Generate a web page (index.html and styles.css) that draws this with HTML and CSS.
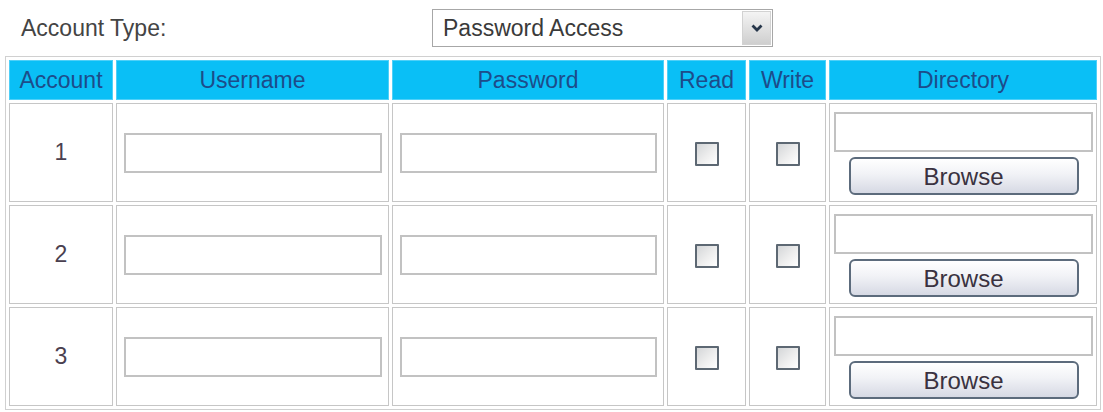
FILE: index.html
```html
<!DOCTYPE html>
<html lang="en">
<head>
    <meta charset="UTF-8">
    <title>FTP Accounts</title>
    <link rel="stylesheet" href="styles.css">
</head>
<body>
    <div class="type-row">
        <label class="type-label" for="accountType">Account Type:</label>
        <div class="select-box">
            <select id="accountType">
                <option>Password Access</option>
                <option>Anonymous</option>
            </select>
            <span class="select-arrow">
                <svg width="12" height="8" viewBox="0 0 12 8">
                    <path d="M1.5 1.5 L6 6 L10.5 1.5" fill="none" stroke="#26364a" stroke-width="2.8"/>
                </svg>
            </span>
        </div>
    </div>

    <table class="accounts">
        <colgroup>
            <col class="c-account">
            <col class="c-user">
            <col class="c-pass">
            <col class="c-read">
            <col class="c-write">
            <col class="c-dir">
        </colgroup>
        <thead>
            <tr>
                <th>Account</th>
                <th>Username</th>
                <th>Password</th>
                <th>Read</th>
                <th>Write</th>
                <th>Directory</th>
            </tr>
        </thead>
        <tbody>
            <tr>
                <td class="num">1</td>
                <td><input type="text" class="field"></td>
                <td><input type="password" class="field"></td>
                <td><input type="checkbox" class="check"></td>
                <td><input type="checkbox" class="check"></td>
                <td class="dir">
                    <input type="text" class="dir-field">
                    <button type="button" class="browse">Browse</button>
                </td>
            </tr>
            <tr>
                <td class="num">2</td>
                <td><input type="text" class="field"></td>
                <td><input type="password" class="field"></td>
                <td><input type="checkbox" class="check"></td>
                <td><input type="checkbox" class="check"></td>
                <td class="dir">
                    <input type="text" class="dir-field">
                    <button type="button" class="browse">Browse</button>
                </td>
            </tr>
            <tr>
                <td class="num">3</td>
                <td><input type="text" class="field"></td>
                <td><input type="password" class="field"></td>
                <td><input type="checkbox" class="check"></td>
                <td><input type="checkbox" class="check"></td>
                <td class="dir">
                    <input type="text" class="dir-field">
                    <button type="button" class="browse">Browse</button>
                </td>
            </tr>
        </tbody>
    </table>
</body>
</html>
```

FILE: styles.css
```css
* {
    margin: 0;
    padding: 0;
    box-sizing: border-box;
}

body {
    background: #fff;
    font-family: "Liberation Sans", Arial, sans-serif;
    font-size: 23px;
    color: #3a3a3a;
}

/* account type selector */
.type-row {
    display: flex;
    align-items: center;
    height: 56px;
    padding-left: 21px;
}

.type-label {
    flex: 0 0 411px;
    color: #444;
}

.select-box {
    display: flex;
    width: 341px;
    height: 38px;
    border: 1px solid #a7a7a7;
    background: #fff;
}

.select-box select {
    flex: 1;
    appearance: none;
    -webkit-appearance: none;
    border: none;
    outline: none;
    background: transparent;
    font-family: inherit;
    font-size: 23px;
    color: #3a3a3a;
    padding-left: 10px;
}

.select-arrow {
    width: 29px;
    display: flex;
    align-items: center;
    justify-content: center;
    margin: 1px;
    border: 1px solid #d2d2d2;
    background: linear-gradient(#f4f4f4, #cfcfcf);
}

/* accounts table */
.accounts {
    margin-left: 5px;
    width: 1096px;
    table-layout: fixed;
    border: 1px solid #d0d0d0;
    border-spacing: 3px;
}

.c-account { width: 104px; }
.c-user { width: 273px; }
.c-pass { width: 272px; }
.c-read { width: 79px; }
.c-write { width: 77px; }
.c-dir { width: 268px; }

.accounts th {
    height: 40px;
    background: #0abff6;
    border: 1px solid #4fd0f8;
    color: #1d4c8a;
    font-size: 23px;
    font-weight: normal;
    white-space: nowrap;
    overflow: hidden;
}

.accounts td {
    height: 99px;
    border: 1px solid #c6c6c6;
    text-align: center;
    vertical-align: middle;
}

.accounts td.num {
    color: #4a404f;
}

.field {
    display: block;
    width: calc(100% - 13px);
    height: 40px;
    margin: 0 auto;
    border: 2px solid #c2c2c2;
    background: #fff;
    font-size: 20px;
    padding: 0 4px;
}

.check {
    appearance: none;
    -webkit-appearance: none;
    width: 24px;
    height: 24px;
    border: 2px solid #5d6873;
    border-radius: 1px;
    background: linear-gradient(135deg, #d4d6d8 0%, #eeeeee 55%, #ffffff 100%);
    vertical-align: middle;
}

.accounts td.dir {
    vertical-align: top;
    padding: 8px 3px 0 4px;
}

.dir-field {
    display: block;
    width: 100%;
    height: 40px;
    border: 2px solid #c2c2c2;
    background: #fff;
}

.browse {
    display: block;
    width: 230px;
    height: 38px;
    margin: 5px auto 0;
    border: 2px solid #5c6b7c;
    border-radius: 6px;
    background: linear-gradient(#ffffff 0%, #f1f2f6 45%, #d6d9e4 100%);
    font-family: inherit;
    font-size: 24px;
    color: #3a3240;
    padding-top: 2px;
}
```
